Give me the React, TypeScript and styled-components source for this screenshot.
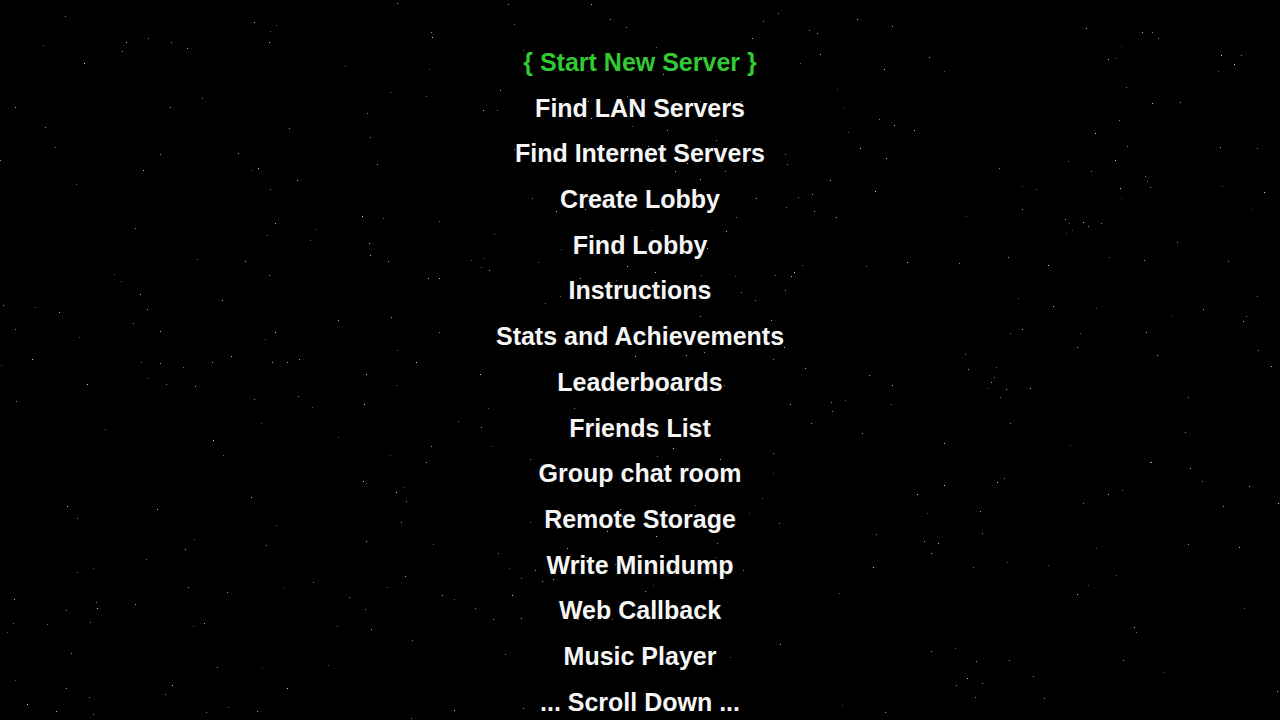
import styled, { createGlobalStyle } from 'styled-components';

const GlobalStyle = createGlobalStyle`
  html, body {
    margin: 0;
    padding: 0;
    background: #000;
    overflow: hidden;
  }
`;

const Screen = styled.div`
  position: relative;
  width: 1280px;
  height: 720px;
  background: #000;
  overflow: hidden;
`;

const Sky = styled.svg`
  position: absolute;
  inset: 0;
  z-index: 0;
`;

const Menu = styled.ul`
  position: relative;
  z-index: 1;
  list-style: none;
  margin: 0;
  padding: 40px 0 0;
  display: flex;
  flex-direction: column;
  align-items: center;
`;

const Item = styled.li<{ $selected?: boolean }>`
  font-family: 'Liberation Sans', Arial, sans-serif;
  font-weight: 700;
  font-size: 25px;
  line-height: 45.7px;
  height: 45.7px;
  white-space: nowrap;
  color: ${(p) => (p.$selected ? '#33c933' : '#f6f6f6')};
`;

const items = [
  'Find LAN Servers',
  'Find Internet Servers',
  'Create Lobby',
  'Find Lobby',
  'Instructions',
  'Stats and Achievements',
  'Leaderboards',
  'Friends List',
  'Group chat room',
  'Remote Storage',
  'Write Minidump',
  'Web Callback',
  'Music Player',
  '... Scroll Down ...',
];

// seeded random so the star field is the same on every render
function makeStars(count: number) {
  let seed = 1337;
  const rand = () => {
    seed = (seed * 16807) % 2147483647;
    return seed / 2147483647;
  };
  const stars = [];
  for (let i = 0; i < count; i++) {
    const x = Math.floor(rand() * 1280);
    const y = Math.floor(rand() * 720);
    const shade = Math.floor(80 + rand() * 130);
    stars.push({ x, y, shade });
  }
  return stars;
}

const stars = makeStars(460);

function App() {
  return (
    <>
      <GlobalStyle />
      <Screen>
        <Sky width="1280" height="720" viewBox="0 0 1280 720">
          {stars.map((s, i) => (
            <rect
              key={i}
              x={s.x}
              y={s.y}
              width="1"
              height="1"
              fill={`rgb(${s.shade},${s.shade},${s.shade})`}
            />
          ))}
        </Sky>
        <Menu>
          <Item $selected>{'{ Start New Server }'}</Item>
          {items.map((item) => (
            <Item key={item}>{item}</Item>
          ))}
        </Menu>
      </Screen>
    </>
  );
}

export default App;
